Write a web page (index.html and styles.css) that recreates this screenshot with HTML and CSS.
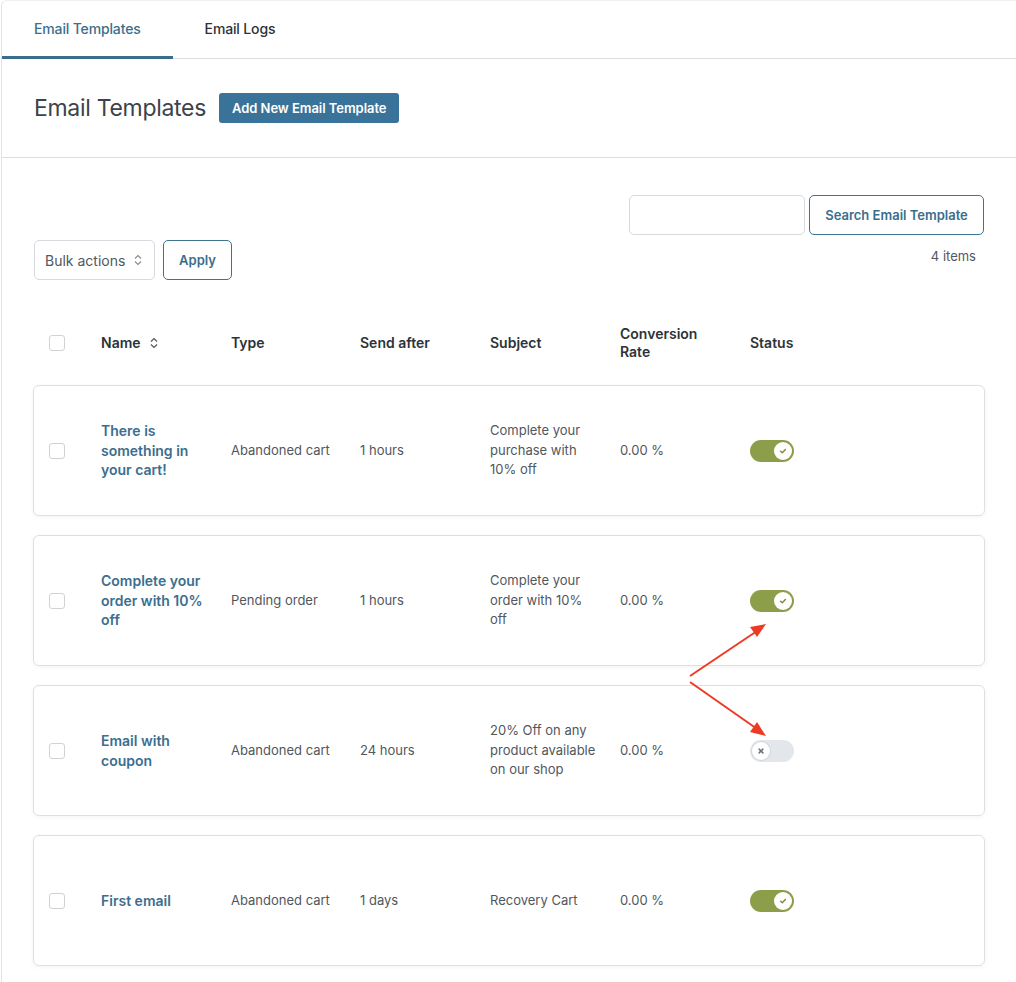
FILE: index.html
```html
<!DOCTYPE html>
<html>
<head>
<meta charset="utf-8">
<link rel="stylesheet" href="styles.css">
</head>
<body>
<div class="panel">
  <nav class="tabs">
    <a class="tab active">Email Templates</a>
    <a class="tab">Email Logs</a>
  </nav>
  <header class="page-head">
    <h1>Email Templates</h1>
    <button class="btn-primary">Add New Email Template</button>
  </header>
  <section class="content">
    <div class="search-row">
      <input class="search-input" type="text">
      <button class="btn-outline btn-search">Search Email Template</button>
    </div>
    <div class="nav-row">
      <div class="bulk">
        <div class="select">Bulk actions
          <svg class="chev" width="10" height="12" viewBox="0 0 10 12"><path d="M2 4.5L5 1.5L8 4.5M2 7.5L5 10.5L8 7.5" fill="none" stroke="#8a8f96" stroke-width="1.2"/></svg>
        </div>
        <button class="btn-outline btn-apply">Apply</button>
      </div>
      <div class="count">4 items</div>
    </div>

    <div class="grid head">
      <div class="cell"><span class="cb"></span></div>
      <div class="cell">Name
        <svg class="sort" width="10" height="12" viewBox="0 0 10 12"><path d="M2 4.5L5 1.5L8 4.5M2 7.5L5 10.5L8 7.5" fill="none" stroke="#50575e" stroke-width="1.2"/></svg>
      </div>
      <div class="cell">Type</div>
      <div class="cell">Send after</div>
      <div class="cell">Subject</div>
      <div class="cell">Conversion Rate</div>
      <div class="cell">Status</div>
    </div>

    <div class="grid row">
      <div class="cell"><span class="cb"></span></div>
      <div class="cell name">There is something in your cart!</div>
      <div class="cell">Abandoned cart</div>
      <div class="cell">1 hours</div>
      <div class="cell">Complete your purchase with 10% off</div>
      <div class="cell">0.00 %</div>
      <div class="cell"><span class="toggle on"><span class="knob"><svg width="10" height="10" viewBox="0 0 10 10"><path d="M2.6 5.2L4.3 6.8L7.4 3.5" fill="none" stroke="#7d8b45" stroke-width="1.5" stroke-linecap="round" stroke-linejoin="round"/></svg></span></span></div>
    </div>

    <div class="grid row">
      <div class="cell"><span class="cb"></span></div>
      <div class="cell name">Complete your order with 10% off</div>
      <div class="cell">Pending order</div>
      <div class="cell">1 hours</div>
      <div class="cell">Complete your order with 10% off</div>
      <div class="cell">0.00 %</div>
      <div class="cell"><span class="toggle on"><span class="knob"><svg width="10" height="10" viewBox="0 0 10 10"><path d="M2.6 5.2L4.3 6.8L7.4 3.5" fill="none" stroke="#7d8b45" stroke-width="1.5" stroke-linecap="round" stroke-linejoin="round"/></svg></span></span></div>
    </div>

    <div class="grid row">
      <div class="cell"><span class="cb"></span></div>
      <div class="cell name">Email with coupon</div>
      <div class="cell">Abandoned cart</div>
      <div class="cell">24 hours</div>
      <div class="cell">20% Off on any product available on our shop</div>
      <div class="cell">0.00 %</div>
      <div class="cell"><span class="toggle off"><span class="knob"><svg width="10" height="10" viewBox="0 0 10 10"><path d="M3.1 3.1L6.9 6.9M6.9 3.1L3.1 6.9" fill="none" stroke="#6b7380" stroke-width="1.5" stroke-linecap="round"/></svg></span></span></div>
    </div>

    <div class="grid row">
      <div class="cell"><span class="cb"></span></div>
      <div class="cell name">First email</div>
      <div class="cell">Abandoned cart</div>
      <div class="cell">1 days</div>
      <div class="cell">Recovery Cart</div>
      <div class="cell">0.00 %</div>
      <div class="cell"><span class="toggle on"><span class="knob"><svg width="10" height="10" viewBox="0 0 10 10"><path d="M2.6 5.2L4.3 6.8L7.4 3.5" fill="none" stroke="#7d8b45" stroke-width="1.5" stroke-linecap="round" stroke-linejoin="round"/></svg></span></span></div>
    </div>
  </section>
</div>

<svg class="arrows" width="1016" height="982" viewBox="0 0 1016 982">
  <path d="M690 676L760 629" stroke="#ee3a24" stroke-width="2" fill="none"/>
  <path d="M766 624L750 627L757 637Z" fill="#ee3a24"/>
  <path d="M690 682L760 731" stroke="#ee3a24" stroke-width="2" fill="none"/>
  <path d="M766 736L757 722L750 732Z" fill="#ee3a24"/>
</svg>
</body>
</html>
```
FILE: styles.css
```css
* { box-sizing: border-box; }
html, body { margin: 0; padding: 0; background: #ffffff; }
body {
  font-family: Inter, "Noto Sans", "Liberation Sans", sans-serif;
  color: #50575e;
  width: 1016px;
  height: 982px;
  overflow: hidden;
  position: relative;
}
.panel {
  margin-left: 1px;
  border-left: 1px solid #e3e4e6;
  border-top: 1px solid #eeeff0;
  border-top-left-radius: 6px;
  min-height: 982px;
  background: #fff;
}
.tabs {
  display: flex;
  height: 58px;
  border-bottom: 1px solid #dcdde0;
}
.tab {
  display: flex;
  align-items: center;
  padding: 0 32px;
  font-size: 14px;
  font-weight: 500;
  color: #2c3338;
  letter-spacing: -0.15px;
  margin-bottom: -1px;
  border-bottom: 3px solid transparent;
}
.tab.active {
  color: #3b6e8c;
  border-bottom-color: #3b6e8c;
}
.page-head {
  display: flex;
  align-items: center;
  gap: 13px;
  height: 99px;
  padding: 0 32px;
  border-bottom: 1px solid #dcdde0;
}
.page-head h1 {
  margin: 0;
  font-size: 23px;
  font-weight: 400;
  color: #3c434a;
  letter-spacing: -0.3px;
}
.btn-primary {
  font-family: inherit;
  background: #3a7399;
  color: #fff;
  border: none;
  border-radius: 3px;
  height: 30px;
  padding: 0 13px;
  font-size: 13px;
  font-weight: 600;
  letter-spacing: -0.05px;
}
.content {
  padding: 37px 31px 0 31px;
}
.search-row {
  display: flex;
  justify-content: flex-end;
  gap: 4px;
  padding: 0 1px;
}
.search-input {
  width: 176px;
  height: 40px;
  border: 1px solid #d6d9dd;
  border-radius: 5px;
  background: #fff;
}
.btn-outline {
  font-family: inherit;
  background: #fff;
  border: 1px solid #3d7590;
  border-radius: 5px;
  color: #3b6e8c;
  font-size: 13px;
  font-weight: 600;
  height: 40px;
}
.btn-search { width: 175px; }
.nav-row {
  display: flex;
  justify-content: space-between;
  margin-top: 5px;
  padding: 0 1px;
}
.bulk { display: flex; gap: 8px; }
.select {
  width: 121px;
  height: 40px;
  border: 1px solid #d6d9dd;
  border-radius: 5px;
  display: flex;
  align-items: center;
  justify-content: space-between;
  padding: 0 11px 0 10px;
  font-size: 14px;
  color: #50575e;
}
.btn-apply { width: 69px; }
.count {
  font-size: 13px;
  color: #50575e;
  padding-top: 8px;
  padding-right: 8px;
}
.grid {
  display: grid;
  grid-template-columns: 52px 130px 129px 130px 130px 130px 130px;
  align-items: center;
  padding-left: 15px;
  border: 1px solid transparent;
}
.grid .cell { padding-right: 20px; }
.head {
  margin-top: 40px;
  height: 46px;
  margin-bottom: 19px;
  font-size: 14px;
  font-weight: 600;
  color: #2c3338;
  line-height: 18px;
}
.head .cell { display: flex; align-items: center; }
.sort { margin-left: 8px; }
.row {
  height: 131px;
  border: 1px solid #dcdfe4;
  border-radius: 6px;
  box-shadow: 0 1px 4px rgba(30, 50, 80, 0.06);
  margin-bottom: 19px;
  font-size: 13px;
  line-height: 19.5px;
  color: #50575e;
}
.row .name {
  font-size: 14px;
  font-weight: 600;
  color: #3b6e8f;
  line-height: 19.5px;
}
.cb {
  display: block;
  width: 16px;
  height: 16px;
  border: 1px solid #cfd3d8;
  border-radius: 3px;
  background: #fff;
}
.toggle {
  display: flex;
  align-items: center;
  width: 44px;
  height: 22px;
  border-radius: 11px;
  padding: 2px;
}
.toggle.on { background: #8c9e4a; justify-content: flex-end; }
.toggle.off { background: #e3e6eb; justify-content: flex-start; }
.knob {
  width: 18px;
  height: 18px;
  border-radius: 50%;
  background: #fff;
  display: flex;
  align-items: center;
  justify-content: center;
}
.toggle.off .knob { box-shadow: 0 0 0 1px #d3d7dd; }
.arrows {
  position: absolute;
  left: 0;
  top: 0;
  pointer-events: none;
}
```
